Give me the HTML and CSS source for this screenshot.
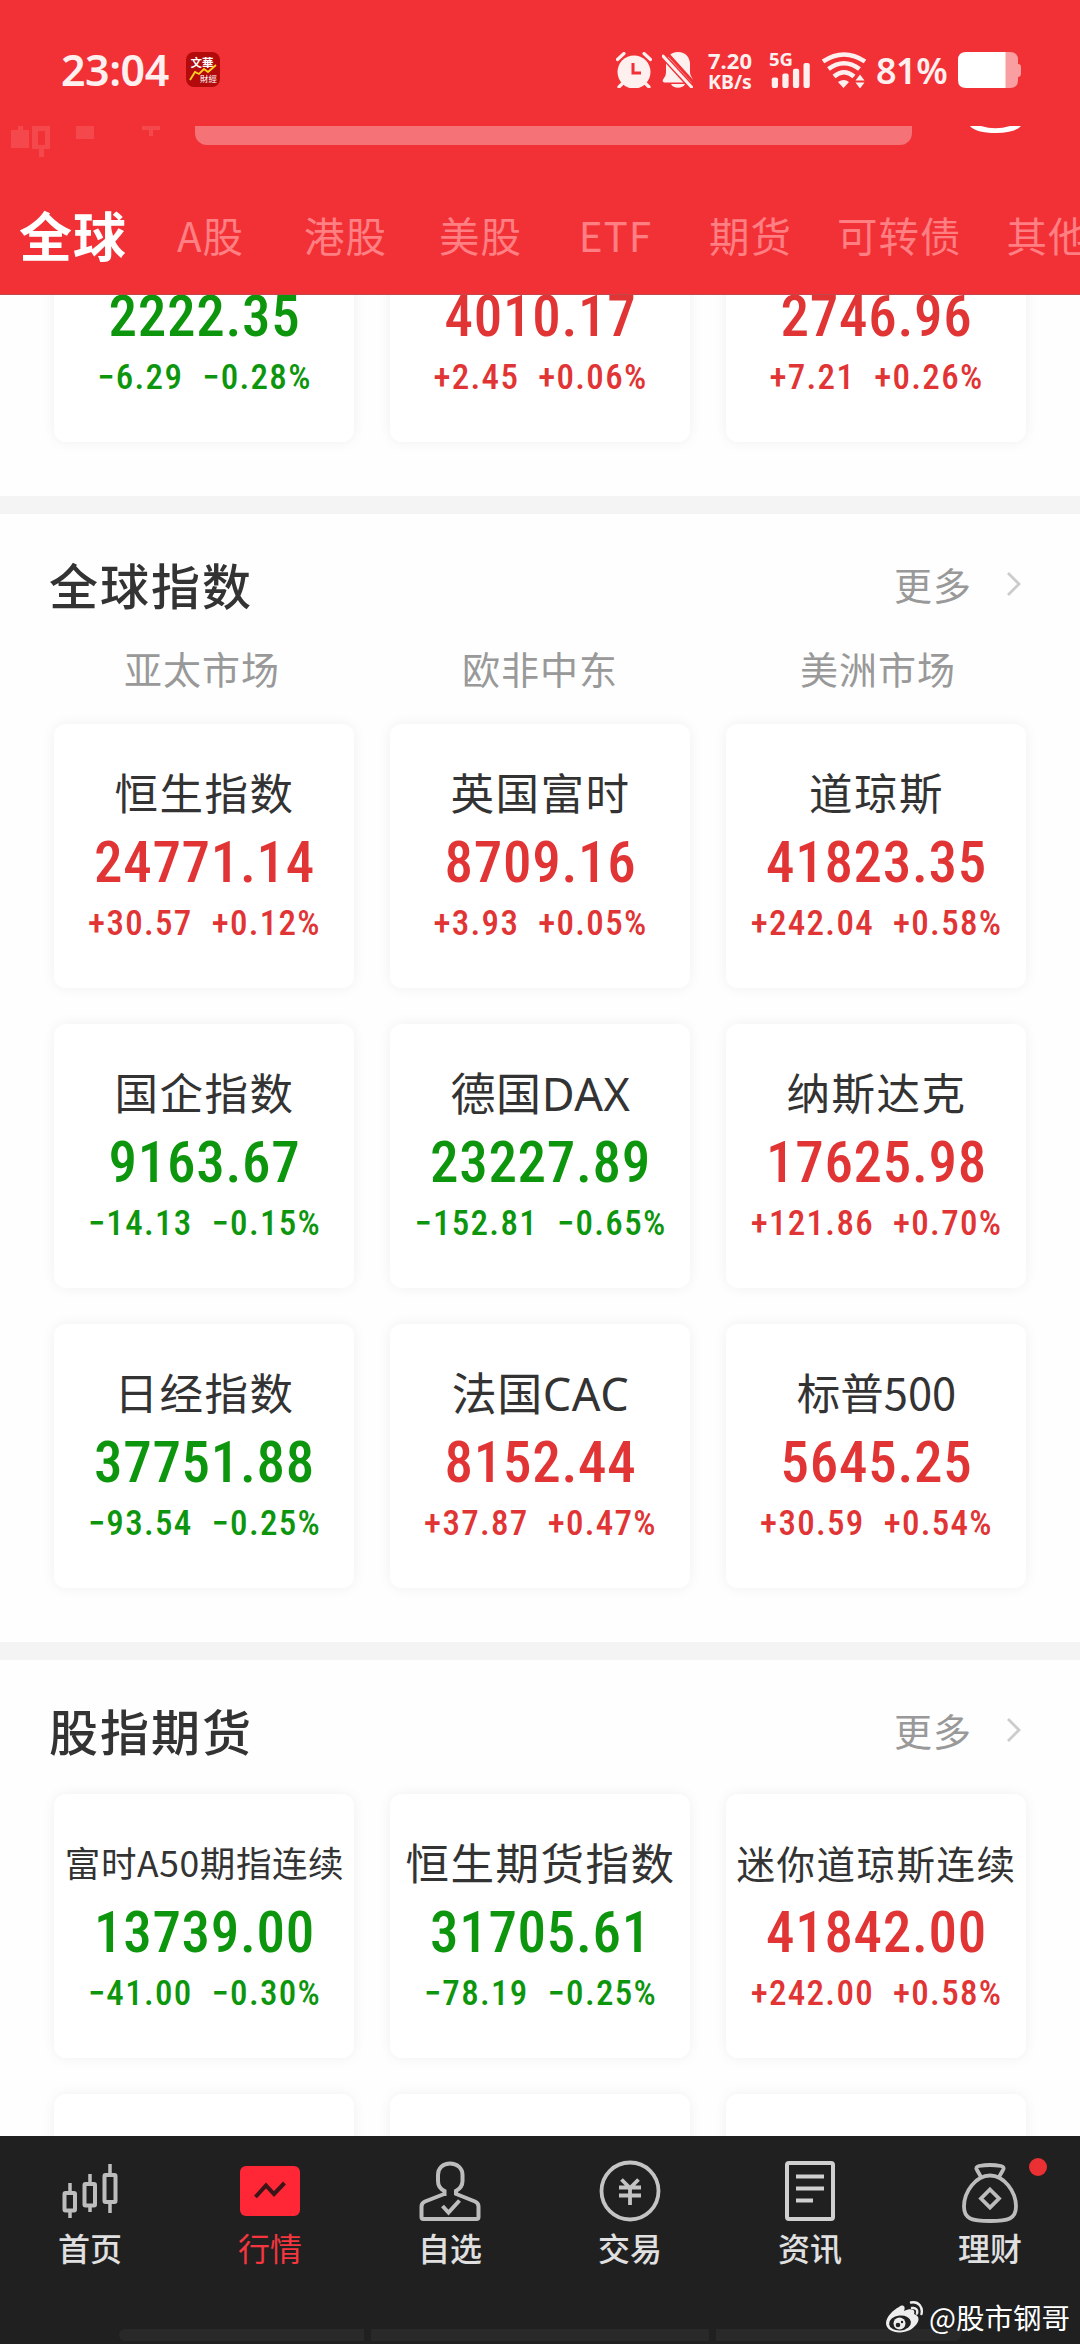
FILE: index.html
```html
<!DOCTYPE html>
<html lang="zh-CN">

<head>
  <meta charset="UTF-8">
  <meta name="viewport" content="width=device-width, initial-scale=1.0">
  <title>行情</title>
  <link rel="stylesheet" href="styles.css">
</head>

<body>
  <header class="header">
    <div class="status">
      <span class="time">23:04</span>
      <svg class="app-icon" width="34" height="35" viewBox="0 0 34 35">
        <rect width="34" height="35" rx="8" fill="#b30a0c" />
        <text x="4.500" y="14.500" font-size="11.500" class="app-text">文華</text>
        <text x="14" y="30" font-size="8.500" class="app-text thin">財經</text>
        <path d="M4 28l5-8 4 2 5-5 4 3 8-7" fill="none" stroke="#ffd21f" stroke-width="1.800" />
      </svg>
      <svg class="alarm" width="36" height="36" viewBox="0 0 36 36">
        <circle cx="18" cy="20" r="16.500" fill="#fff0f0" />
        <path d="M1.500 7.500L8 1.500M34.500 7.500L28 1.500M8 30l-5 5M28 30l5 5" fill="none" stroke="#fff0f0" stroke-width="3.200" stroke-linecap="round" />
        <path d="M17 11v10h8" fill="none" stroke="#f23136" stroke-width="3" />
      </svg>
      <svg class="bell" width="32" height="36" viewBox="0 0 32 36">
        <path d="M16 0c7.500 0 12 5.500 12 12v8c0 4 3 6 3 9 0 1-1 1.500-2 1.500H3c-1.500 0-3-1-2-3 2-3 3-4 3-8v-7C4 5.500 8.500 0 16 0zM9 32h14c-2 5-12 5-14 0z" fill="#fff0f0" />
        <path d="M4 0l28 31" stroke="#f23136" stroke-width="3" />
        <path d="M1 4l28.500 31" stroke="#f23136" stroke-width="6" />
        <path d="M1 4l28.500 31" stroke="#fff0f0" stroke-width="3" stroke-linecap="round" />
      </svg>
      <div class="speed"><b>7.20</b><b>KB/s</b></div>
      <div class="signal">
        <b>5G</b>
        <svg width="42" height="25" viewBox="0 0 42 26" fill="#fff0f0">
          <rect x="1" y="15" width="6.500" height="11" rx="2" />
          <rect x="12" y="11" width="6.500" height="15" rx="2" />
          <rect x="23" y="6" width="6.500" height="20" rx="2" />
          <rect x="34" y="0" width="6.500" height="26" rx="2" />
        </svg>
      </div>
      <svg class="wifi" width="44" height="36" viewBox="0 0 44 36">
        <g fill="none" stroke="#fff0f0" stroke-width="4.500">
          <path d="M1 9.500q21-14 42 0" />
          <path d="M6.500 17q15.500-11.500 31 0" />
          <path d="M12 24.500q10-8.500 20 0" />
        </g>
        <path d="M16 30q6-4 11 0l-5.500 6zM33.500 28.500l4.500-6 4.500 6zM33.500 30.500l4.500 6 4.500-6z" fill="#fff0f0" />
      </svg>
      <span class="percent">81%</span>
      <svg class="battery" width="63" height="36" viewBox="0 0 63 36">
        <path d="M47 0h5q8 0 8 8v4q3 0 3 3v6q0 4-3 4v3q0 8-8 8h-5z" fill="#fa9fa1" />
        <path d="M8 0h39.500v36H8q-8 0-8-8V8q0-8 8-8z" fill="#fff" />
      </svg>
    </div>

    <div class="search-row">
      <svg class="candles" width="160" height="32" viewBox="0 0 160 32">
        <path d="M7 0h5v4h6v18H0V4h7zM65 0h18v13H65zM131 0h18v4h-7v6h-4V4h-7z" fill="#f4484c" />
        <path d="M21 0h18v23h-6v8h-5v-8h-7zM27 5v14h7V5z" fill="#f4484c" fill-rule="evenodd" />
      </svg>
      <div class="search"></div>
      <svg class="user" width="52" height="8" viewBox="0 0 52 8">
        <path d="M0 0h11q14.500 4.500 29 0h11q-6 7-25.500 7T0 0z" fill="#fff" />
      </svg>
    </div>

    <nav class="tabs">
      <a class="tab active">全球</a>
      <a class="tab">A股</a>
      <a class="tab">港股</a>
      <a class="tab">美股</a>
      <a class="tab">ETF</a>
      <a class="tab">期货</a>
      <a class="tab">可转债</a>
      <a class="tab">其他</a>
    </nav>
  </header>

  <main class="content">
    <section class="section first">
      <div class="cards">
        <div class="card down">
          <div class="name"></div>
          <div class="price">2222.35</div>
          <div class="change"><span>−6.29</span><span>−0.28%</span></div>
        </div>
        <div class="card up">
          <div class="name"></div>
          <div class="price">4010.17</div>
          <div class="change"><span>+2.45</span><span>+0.06%</span></div>
        </div>
        <div class="card up">
          <div class="name"></div>
          <div class="price">2746.96</div>
          <div class="change"><span>+7.21</span><span>+0.26%</span></div>
        </div>
      </div>
    </section>

    <section class="section">
      <div class="heading">
        <h2>全球指数</h2>
        <a class="more">更多
          <svg width="16" height="26" viewBox="0 0 16 26"><path d="M2 2l11 11L2 24" fill="none" stroke="#ccc" stroke-width="2.800" /></svg>
        </a>
      </div>
      <div class="markets">
        <span>亚太市场</span>
        <span>欧非中东</span>
        <span>美洲市场</span>
      </div>
      <div class="cards">
        <div class="card up">
          <div class="name">恒生指数</div>
          <div class="price">24771.14</div>
          <div class="change"><span>+30.57</span><span>+0.12%</span></div>
        </div>
        <div class="card up">
          <div class="name">英国富时</div>
          <div class="price">8709.16</div>
          <div class="change"><span>+3.93</span><span>+0.05%</span></div>
        </div>
        <div class="card up">
          <div class="name">道琼斯</div>
          <div class="price">41823.35</div>
          <div class="change"><span>+242.04</span><span>+0.58%</span></div>
        </div>
        <div class="card down">
          <div class="name">国企指数</div>
          <div class="price">9163.67</div>
          <div class="change"><span>−14.13</span><span>−0.15%</span></div>
        </div>
        <div class="card down">
          <div class="name latin">德国DAX</div>
          <div class="price">23227.89</div>
          <div class="change"><span>−152.81</span><span>−0.65%</span></div>
        </div>
        <div class="card up">
          <div class="name">纳斯达克</div>
          <div class="price">17625.98</div>
          <div class="change"><span>+121.86</span><span>+0.70%</span></div>
        </div>
        <div class="card down">
          <div class="name">日经指数</div>
          <div class="price">37751.88</div>
          <div class="change"><span>−93.54</span><span>−0.25%</span></div>
        </div>
        <div class="card up">
          <div class="name latin">法国CAC</div>
          <div class="price">8152.44</div>
          <div class="change"><span>+37.87</span><span>+0.47%</span></div>
        </div>
        <div class="card up">
          <div class="name digits">标普500</div>
          <div class="price">5645.25</div>
          <div class="change"><span>+30.59</span><span>+0.54%</span></div>
        </div>
      </div>
    </section>

    <section class="section futures">
      <div class="heading">
        <h2>股指期货</h2>
        <a class="more">更多
          <svg width="16" height="26" viewBox="0 0 16 26"><path d="M2 2l11 11L2 24" fill="none" stroke="#ccc" stroke-width="2.800" /></svg>
        </a>
      </div>
      <div class="cards">
        <div class="card down">
          <div class="name small">富时A50期指连续</div>
          <div class="price">13739.00</div>
          <div class="change"><span>−41.00</span><span>−0.30%</span></div>
        </div>
        <div class="card down">
          <div class="name">恒生期货指数</div>
          <div class="price">31705.61</div>
          <div class="change"><span>−78.19</span><span>−0.25%</span></div>
        </div>
        <div class="card up">
          <div class="name medium">迷你道琼斯连续</div>
          <div class="price">41842.00</div>
          <div class="change"><span>+242.00</span><span>+0.58%</span></div>
        </div>
        <div class="card"></div>
        <div class="card"></div>
        <div class="card"></div>
      </div>
    </section>
  </main>

  <footer class="footer">
    <nav class="menu">
      <a class="item">
        <svg width="64" height="64" viewBox="0 0 64 64" fill="none" stroke="#bdbdbd" stroke-width="4">
          <rect x="6.500" y="34" width="10.500" height="17.500" rx="1" />
          <rect x="26.500" y="25" width="10.500" height="21.500" rx="1" />
          <rect x="46.500" y="16" width="11" height="27" rx="1" />
          <path d="M12 24v9M12 52v7M32 15v9M32 47v6M52 5v10M52 44v10" stroke-width="3.500" />
        </svg>
        <span>首页</span>
      </a>
      <a class="item current">
        <svg width="64" height="64" viewBox="0 0 64 64">
          <rect x="2" y="7" width="60" height="50" rx="6" fill="#ff2636" />
          <path d="M17.500 38L28 26.500l8 8.500 10.500-11" fill="none" stroke="#3c1519" stroke-width="4" />
        </svg>
        <span>行情</span>
      </a>
      <a class="item">
        <svg width="64" height="64" viewBox="0 0 64 64" fill="none" stroke="#bdbdbd" stroke-width="4">
          <path d="M26.500 37v-5c-4-2-6.500-5-6.500-10v-6c0-7 5-11.500 12-11.500S44.500 9 44.500 16v6c0 5-3 8-6.500 10v4M27.500 34.500L7 42.500q-3.500 1.500-3.500 5V58q0 2 2 2h53q2 0 2-2V47.500q0-3.500-3.500-5L37 34.500M24.500 47l6 6.500 11-12" />
        </svg>
        <span>自选</span>
      </a>
      <a class="item">
        <svg width="64" height="64" viewBox="0 0 64 64" fill="none" stroke="#c4c4c4" stroke-width="3.800">
          <circle cx="32" cy="32" r="28.500" />
          <path d="M23.500 20.500l8.500 8.500 8.500-8.500M21 28.500h22M21 36.500h22M32 28v18" />
        </svg>
        <span>交易</span>
      </a>
      <a class="item">
        <svg width="64" height="64" viewBox="0 0 64 64" fill="none" stroke="#d0d0d0" stroke-width="4">
          <rect x="9" y="4" width="46" height="56" rx="2" />
          <path d="M18 17.500h28M18 29.500h28M18 41.500h17" />
        </svg>
        <span>资讯</span>
      </a>
      <a class="item">
        <svg width="64" height="64" viewBox="0 0 64 64" fill="none" stroke="#bdbdbd" stroke-width="3.800">
          <path d="M23 18l-4-7q-2-3 2-4 11-2 22 0 4 1 2 4l-4 7" />
          <path d="M32 16.500c14 0 26 16 26 31C58 60 50 62 32 62S6 60 6 47.500c0-15 12-31 26-31z" />
          <path d="M32 30.500l9 9-9 9-9-9z" />
        </svg>
        <span>理财</span>
        <i class="dot"></i>
      </a>
    </nav>
    <div class="bars">
      <i></i><i class="wide"></i><i></i>
    </div>
    <div class="author">
      <svg width="38" height="33" viewBox="0 0 38 33">
        <path d="M13 6c4-3 7-1 5 4 6-3 12-2 10 3 9 3 3 12-4 16C14 34 0 31 0 22 0 16 7 9 13 6z" fill="#eee" />
        <ellipse cx="14" cy="22" rx="11" ry="7.500" fill="#212121" transform="rotate(-6 14 22)" />
        <circle cx="13.500" cy="22.500" r="6" fill="#eee" />
        <circle cx="12" cy="24" r="2.300" fill="#212121" />
        <circle cx="16" cy="21" r="1.200" fill="#212121" />
        <path d="M25 1.500c8-1.500 12 5 10.500 11.500M26 7c4-.5 6 2 5 5.500" fill="none" stroke="#eee" stroke-width="2.400" stroke-linecap="round" />
      </svg>
      <span>@股市钢哥</span>
    </div>
  </footer>
</body>

</html>
```

FILE: styles.css
```css
* {
  margin: 0;
  padding: 0;
  box-sizing: border-box;
}

body {
  width: 1080px;
  height: 2344px;
  display: flex;
  flex-direction: column;
  overflow: hidden;
  background: #fefefe;
  color: #333;
  font-family: "Noto Sans CJK SC", sans-serif;
}

svg {
  display: block;
  flex: none;
}

/* header */
.header {
  height: 295px;
  flex: none;
  background: #f23136;
  border-bottom: 1px solid #c4484b;
}

.status {
  height: 126px;
  padding: 52px 0 0 61px;
  display: flex;
  align-items: flex-start;
  color: #fff0f0;
  font-family: "Noto Sans", sans-serif;
}

.time {
  width: 125px;
  font-size: 43px;
  font-weight: 600;
  line-height: 36px;
  letter-spacing: -0.5px;
}

.app-text {
  fill: #fff;
  font-family: "Noto Sans CJK TC", sans-serif;
  font-weight: 700;
}

.app-text.thin {
  font-weight: 400;
}

.alarm {
  margin-left: 396px;
}

.bell {
  margin-left: 10px;
}

.speed {
  width: 46px;
  margin-left: 13px;
  display: flex;
  flex-direction: column;
  align-items: center;
  font-size: 22px;
  line-height: 17px;
  white-space: nowrap;
}

.speed b {
  height: 17px;
}

.speed b + b {
  margin-top: 4px;
  font-size: 19.5px;
}

.signal {
  width: 42px;
  height: 36px;
  margin-left: 16px;
}

.signal b {
  display: block;
  height: 11px;
  font-size: 18.5px;
  line-height: 14px;
}

.signal svg {
  margin-left: 1px;
}

.wifi {
  margin-left: 11px;
}

.percent {
  width: 80px;
  padding-left: 10px;
  font-size: 36px;
  font-weight: 600;
  line-height: 37px;
  letter-spacing: -0.5px;
}

.battery {
  margin-left: 12px;
}

.search-row {
  height: 56px;
  padding-left: 11px;
  display: flex;
}

.search {
  width: 717px;
  height: 19px;
  margin-left: 24px;
  background: #f57376;
  border-radius: 0 0 12px 12px;
}

.user {
  margin-left: 58px;
}

.tabs {
  height: 112px;
  display: flex;
  align-items: flex-start;
}

.tab {
  min-width: 135px;
  padding: 0 18px;
  flex: none;
  font-size: 40.5px;
  line-height: 105px;
  letter-spacing: 1px;
  text-align: center;
  color: #ff7f83;
}

.tab:nth-child(7) {
  padding: 0 19px;
}

.tab.active {
  padding: 0 16px 0 19px;
  font-size: 53px;
  font-weight: 700;
  letter-spacing: 1px;
  color: #fff;
}

/* sections */
.content {
  flex: 1;
  min-height: 0;
  overflow: hidden;
}

.section {
  padding: 40px 0 54px;
  border-bottom: 18px solid #f4f4f4;
}

.section.first {
  margin-top: -117px;
  padding-top: 0;
}

.heading {
  height: 60px;
  padding: 0 58px 0 49px;
  display: flex;
  align-items: center;
  justify-content: space-between;
}

.heading h2 {
  font-size: 49px;
  font-weight: 500;
  line-height: 60px;
  letter-spacing: 2px;
}

.more {
  display: flex;
  align-items: center;
  gap: 34px;
  color: #999;
  font-size: 38px;
  line-height: 60px;
  letter-spacing: 1px;
}

.markets {
  padding: 29px 33px 0;
  display: grid;
  grid-template-columns: repeat(3, 1fr);
  color: #999;
  font-size: 38px;
  line-height: 50px;
  letter-spacing: 1px;
  text-align: center;
}

.cards {
  padding: 0 54px;
  display: grid;
  grid-template-columns: repeat(3, 300px);
  gap: 36px;
}

.markets + .cards {
  margin-top: 31px;
}

.futures .cards {
  margin-top: 34px;
}

.card {
  height: 264px;
  padding-top: 38px;
  display: flex;
  flex-direction: column;
  align-items: center;
  background: #fff;
  border-radius: 12px;
  box-shadow: 0 0 14px rgba(0, 0, 0, 0.06);
  white-space: nowrap;
}

.name {
  height: 60px;
  padding-left: 1px;
  font-size: 43.5px;
  line-height: 60px;
  letter-spacing: 1.5px;
}

.name.latin {
  padding-top: 2px;
  font-family: "Noto Sans", "Noto Sans CJK SC", sans-serif;
  font-size: 45px;
  letter-spacing: 0.6px;
}

.name.digits {
  letter-spacing: 0;
}

.name.small {
  font-size: 35.5px;
  letter-spacing: 0.6px;
}

.name.medium {
  font-size: 38.5px;
  letter-spacing: 1.5px;
}

.price {
  margin-top: 14px;
  padding-left: 1px;
  font-family: Roboto, sans-serif;
  font-size: 57px;
  font-weight: 500;
  font-stretch: 75%;
  line-height: 54px;
  letter-spacing: 0.7px;
}

.change {
  margin-top: 16px;
  padding-left: 1px;
  display: flex;
  gap: 19px;
  font-family: Roboto, sans-serif;
  font-size: 35px;
  font-weight: 500;
  font-stretch: 75%;
  line-height: 36px;
  letter-spacing: 1.3px;
}

.up .price,
.up .change {
  color: #e13435;
}

.down .price,
.down .change {
  color: #0d960d;
}

/* bottom menu */
.footer {
  position: relative;
  height: 208px;
  flex: none;
  background: #202020;
}

.menu {
  height: 193px;
  display: grid;
  grid-template-columns: repeat(6, 1fr);
}

.item {
  position: relative;
  padding-top: 23px;
  display: flex;
  flex-direction: column;
  align-items: center;
  color: #e0e0e0;
  font-size: 32px;
  font-weight: 500;
  line-height: 46px;
}

.item span {
  margin-top: 1px;
}

.item svg {
  overflow: visible;
}

.item.current {
  color: #f5363f;
}

.item.current span {
  font-weight: 400;
}

.dot {
  position: absolute;
  top: 22px;
  left: 129px;
  width: 18px;
  height: 18px;
  border-radius: 50%;
  background: #ea3033;
}

.bars {
  padding-left: 119px;
  display: flex;
  gap: 7px;
}

.bars i {
  width: 245px;
  height: 12px;
  background: #292929;
}

.bars .wide {
  width: 338px;
}

.bars i:first-child {
  border-radius: 6px 0 0 6px;
}

.bars i:last-child {
  border-radius: 0 0 6px 0;
}

.author {
  position: absolute;
  right: 10px;
  bottom: 10px;
  display: flex;
  align-items: center;
  gap: 5px;
  color: #fff;
  font-size: 28.5px;
  line-height: 34px;
}
```
